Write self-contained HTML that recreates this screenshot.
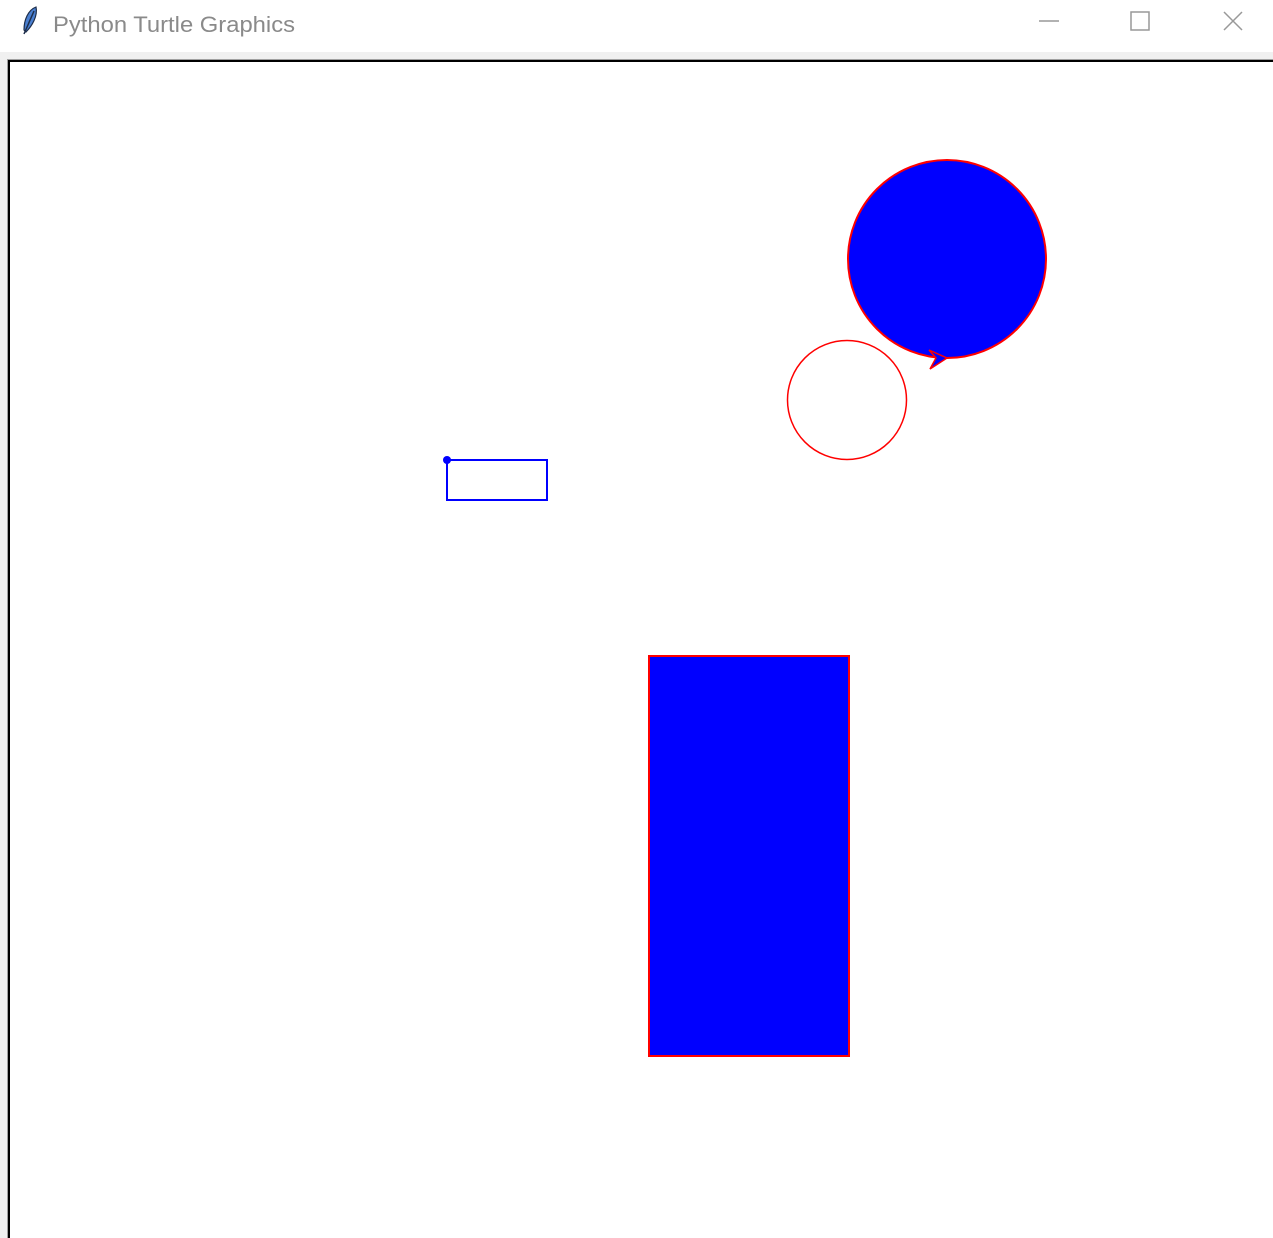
<!DOCTYPE html>
<html><head><meta charset="utf-8"><style>
html,body{margin:0;padding:0;width:1273px;height:1238px;overflow:hidden;background:#fff;font-family:"Liberation Sans",sans-serif}
</style></head><body>
<svg width="1273" height="1238" viewBox="0 0 1273 1238" xmlns="http://www.w3.org/2000/svg" style="position:absolute;left:0;top:0">
<rect x="0" y="0" width="1273" height="52" fill="#fff"/>
<rect x="0" y="52" width="1273" height="1186" fill="#f0f0f0"/>
<rect x="7" y="59" width="1266" height="1179" fill="#a0a0a0"/>
<rect x="8" y="60" width="1265" height="1178" fill="#000"/>
<rect x="10" y="62" width="1263" height="1176" fill="#fff"/>
<path d="M36 7 C28 10 24 20 24 30 L26 32 C32 26 38 16 36 7Z" fill="#4a7fd0" stroke="#1d2d4a" stroke-width="1.2"/>
<path d="M34 11 L24 34" stroke="#1d2d4a" stroke-width="1.5"/>
<text x="53" y="32" font-size="22.5" fill="#8a8a8a" textLength="242" lengthAdjust="spacingAndGlyphs" font-family="'Liberation Sans',sans-serif">Python Turtle Graphics</text>
<line x1="1039" y1="21" x2="1059" y2="21" stroke="#999" stroke-width="1.5"/>
<rect x="1131" y="12" width="18" height="18" fill="none" stroke="#999" stroke-width="1.5"/>
<path d="M1224 12 L1242 30 M1242 12 L1224 30" stroke="#999" stroke-width="1.5"/>
<circle cx="947" cy="259" r="99" fill="#0000ff" stroke="#ff0000" stroke-width="2"/>
<path d="M929 350 L947 358 L930 369 L936 358 Z" fill="#0000ff" stroke="#ff0000" stroke-width="1.5"/>
<circle cx="847" cy="400" r="59.5" fill="none" stroke="#ff0000" stroke-width="1.5"/>
<rect x="447" y="460" width="100" height="40" fill="none" stroke="#0000ff" stroke-width="2"/>
<circle cx="447" cy="460" r="4" fill="#0000ff"/>
<rect x="649" y="656" width="200" height="400" fill="#0000ff" stroke="#ff0000" stroke-width="2"/>
</svg>
</body></html>
